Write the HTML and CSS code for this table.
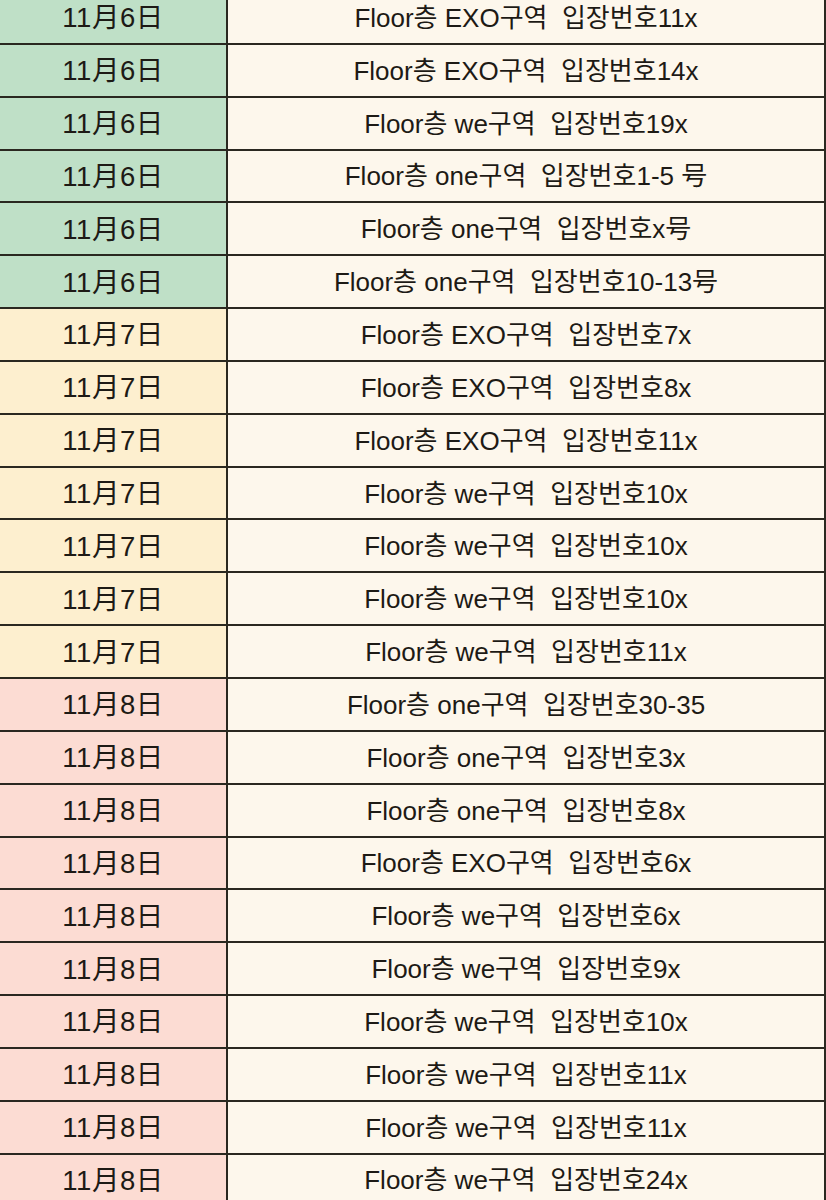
FILE: index.html
```html
<!DOCTYPE html>
<html lang="ko">
<head>
<meta charset="utf-8">
<title>입장번호</title>
<link rel="stylesheet" href="styles.css">
</head>
<body>
<div class="table">
  <div class="row g"><div class="date">11月6日</div><div class="info">Floor층 EXO구역  입장번호11x</div></div>
  <div class="row g"><div class="date">11月6日</div><div class="info">Floor층 EXO구역  입장번호14x</div></div>
  <div class="row g"><div class="date">11月6日</div><div class="info">Floor층 we구역  입장번호19x</div></div>
  <div class="row g"><div class="date">11月6日</div><div class="info">Floor층 one구역  입장번호1-5 号</div></div>
  <div class="row g"><div class="date">11月6日</div><div class="info">Floor층 one구역  입장번호x号</div></div>
  <div class="row g"><div class="date">11月6日</div><div class="info">Floor층 one구역  입장번호10-13号</div></div>
  <div class="row y"><div class="date">11月7日</div><div class="info">Floor층 EXO구역  입장번호7x</div></div>
  <div class="row y"><div class="date">11月7日</div><div class="info">Floor층 EXO구역  입장번호8x</div></div>
  <div class="row y"><div class="date">11月7日</div><div class="info">Floor층 EXO구역  입장번호11x</div></div>
  <div class="row y"><div class="date">11月7日</div><div class="info">Floor층 we구역  입장번호10x</div></div>
  <div class="row y"><div class="date">11月7日</div><div class="info">Floor층 we구역  입장번호10x</div></div>
  <div class="row y"><div class="date">11月7日</div><div class="info">Floor층 we구역  입장번호10x</div></div>
  <div class="row y"><div class="date">11月7日</div><div class="info">Floor층 we구역  입장번호11x</div></div>
  <div class="row p"><div class="date">11月8日</div><div class="info">Floor층 one구역  입장번호30-35</div></div>
  <div class="row p"><div class="date">11月8日</div><div class="info">Floor층 one구역  입장번호3x</div></div>
  <div class="row p"><div class="date">11月8日</div><div class="info">Floor층 one구역  입장번호8x</div></div>
  <div class="row p"><div class="date">11月8日</div><div class="info">Floor층 EXO구역  입장번호6x</div></div>
  <div class="row p"><div class="date">11月8日</div><div class="info">Floor층 we구역  입장번호6x</div></div>
  <div class="row p"><div class="date">11月8日</div><div class="info">Floor층 we구역  입장번호9x</div></div>
  <div class="row p"><div class="date">11月8日</div><div class="info">Floor층 we구역  입장번호10x</div></div>
  <div class="row p"><div class="date">11月8日</div><div class="info">Floor층 we구역  입장번호11x</div></div>
  <div class="row p"><div class="date">11月8日</div><div class="info">Floor층 we구역  입장번호11x</div></div>
  <div class="row p"><div class="date">11月8日</div><div class="info">Floor층 we구역  입장번호24x</div></div>
</div>
</body>
</html>
```
FILE: styles.css
```css
html, body {
  margin: 0;
  padding: 0;
  background: #fdf7ec;
  overflow: hidden;
}
.table {
  margin-top: -8px;
  display: flex;
  flex-direction: column;
  font-family: "Liberation Sans", "Noto Sans CJK KR", sans-serif;
  color: #1d1a15;
}
.row {
  display: flex;
  box-sizing: border-box;
  height: 52.85px;
  flex: none;
  border-bottom: 2px solid #2a2820;
}
.date {
  width: 226px;
  flex: none;
  display: flex;
  align-items: center;
  justify-content: center;
  padding-bottom: 4px;
  font-size: 27.5px;
  letter-spacing: 0.5px;
  border-right: 2px solid #2a2820;
}
.info {
  flex: 1;
  display: flex;
  align-items: center;
  justify-content: center;
  padding-bottom: 4px;
  font-size: 26px;
  white-space: pre;
  background: #fdf7ec;
  border-right: 2px solid #2a2820;
}
.g .date { background: #bfe0c7; }
.y .date { background: #fdefcf; }
.p .date { background: #fcdcd3; }
```
